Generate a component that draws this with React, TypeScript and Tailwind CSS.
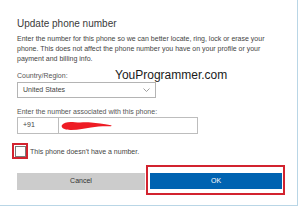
import React from 'react';

const font = "font-['Liberation_Sans',Arial,sans-serif]";

export default function App() {
  return (
    <div className={`relative w-[298px] h-[206px] bg-white border-r border-b border-[#b9d6e6] text-[#3a3a3a] overflow-hidden ${font}`}>
      <div className="pl-[17px] pt-[17px]">
        <div className="text-[10px] leading-[14px] text-[#3a3a3a]">Update phone number</div>

        <div className="mt-[3px] text-[7px] leading-[10px] text-[#444] whitespace-nowrap">
          <div>Enter the number for this phone so we can better locate, ring, lock or erase your</div>
          <div>phone. This does not affect the phone number you have on your profile or your</div>
          <div>payment and billing info.</div>
        </div>

        <div className="mt-[7px] text-[7px] leading-[10px] text-[#555]">Country/Region:</div>
        <div className="mt-[1px] w-[139px] h-[16px] border border-[#b4b4b4] flex items-center justify-between pl-[5px] pr-[5px]">
          <span className="text-[7px] text-[#444]">United States</span>
          <svg width="7" height="4" viewBox="0 0 7 4" fill="none">
            <path d="M0.5 0.5 L3.5 3.5 L6.5 0.5" stroke="#888" strokeWidth="0.8" />
          </svg>
        </div>

        <div className="mt-[9px] text-[7px] leading-[10px] text-[#555]">Enter the number associated with this phone:</div>
        <div className="w-[181px] h-[17px] border border-[#bdbdbd] flex">
          <div className="w-[41px] h-full border-r border-[#bdbdbd] flex items-center pl-[5px] text-[7px] text-[#444]">+91</div>
          <div className="flex-1 flex items-center pl-[2px]">
            <svg width="52" height="11" viewBox="0 0 52 11">
              <path d="M1 5 C3 2 8 1.5 14 2.2 C20 2.8 24 2 30 2.6 C36 3.2 42 3.8 50 5.2 C51 5.6 50.5 6.2 49 6.2 C42 6 36 6.4 30 7.4 C24 8.4 18 9.6 10 10 C6 10.2 2 9 1.2 7.6 C0.6 6.6 0.5 5.8 1 5 Z" fill="#ee1c24" />
            </svg>
          </div>
        </div>

        <div className="mt-[12px] -ml-[2px] flex items-center gap-[4px]">
          <div className="w-[11px] h-[11px] border border-[#7a7a7a] bg-white" />
          <span className="text-[7px] leading-[10px] text-[#444]">This phone doesn't have a number.</span>
        </div>

        <div className="mt-[16px] flex gap-[5px]">
          <div className="w-[128px] h-[17px] bg-[#cccccc] flex items-center justify-center text-[7px] text-[#333]">Cancel</div>
          <div className="w-[132px] h-[16px] bg-[#0063b1] flex items-center justify-center text-[7px] text-white">OK</div>
        </div>
      </div>

      {/* watermark */}
      <div className="absolute left-[115px] top-[68px] text-[12px] leading-[14px] text-[#1a1a1a]">YouProgrammer.com</div>

      {/* red annotation frames */}
      <div className="absolute left-[12px] top-[143px] w-[16px] h-[16px] border-2 border-[#d2232f]" />
      <div className="absolute left-[146px] top-[165px] w-[139px] h-[30px] border-2 border-[#d2232f]" />
    </div>
  );
}
